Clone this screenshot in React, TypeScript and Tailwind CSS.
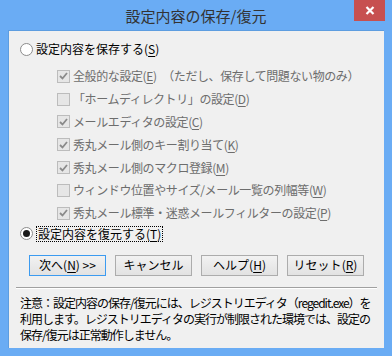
import React from "react";

const FONT = { fontFamily: '"Noto Sans CJK JP", "Noto Sans", sans-serif' };

// ── small pieces ────────────────────────────────────────────────────────────
function Key({ k }: { k: string }) {
  return (
    <>
      (<span className="underline underline-offset-2">{k}</span>)
    </>
  );
}

function Check({ checked }: { checked: boolean }) {
  return (
    <span className="flex h-[13px] w-[13px] shrink-0 items-center justify-center border border-[#bcbcbc] bg-[#e6e6e6]">
      {checked && (
        <svg width="9" height="8" viewBox="0 0 9 8">
          <path d="M1 4 L3.5 6.5 L8 1" fill="none" stroke="#8a8a8a" strokeWidth="1.8" />
        </svg>
      )}
    </span>
  );
}

function Radio({ on }: { on: boolean }) {
  return (
    <span className="flex h-[13px] w-[13px] shrink-0 items-center justify-center rounded-full border border-[#8c8c8c] bg-white">
      {on && <span className="h-[7px] w-[7px] rounded-full bg-[#1a1a1a]" />}
    </span>
  );
}

const rows: { label: React.ReactNode; checked: boolean }[] = [
  { label: <>全般的な設定<Key k="E" />　（ただし、保存して問題ない物のみ）</>, checked: true },
  { label: <>「ホームディレクトリ」の設定<Key k="D" /></>, checked: false },
  { label: <>メールエディタの設定<Key k="C" /></>, checked: true },
  { label: <>秀丸メール側のキー割り当て<Key k="K" /></>, checked: true },
  { label: <>秀丸メール側のマクロ登録<Key k="M" /></>, checked: true },
  { label: <>ウィンドウ位置やサイズ/メール一覧の列幅等<Key k="W" /></>, checked: false },
  { label: <>秀丸メール標準・迷惑メールフィルターの設定<Key k="P" /></>, checked: true },
];

function Btn({ children, primary }: { children: React.ReactNode; primary?: boolean }) {
  return (
    <button
      className={`flex h-[21px] w-[77px] items-center justify-center bg-gradient-to-b from-[#f2f2f2] to-[#e2e2e2] text-[12px] text-black ${
        primary ? "border border-[#3c9bf0]" : "border border-[#acacac]"
      }`}
    >
      {children}
    </button>
  );
}

export default function App() {
  return (
    <div className="h-[356px] w-[392px] bg-[#6aacf4] text-[12px] leading-none text-black" style={FONT}>
      {/* title bar */}
      <div className="relative flex h-[30px] items-center justify-center">
        <span className="text-[15px] text-[#333333]">設定内容の保存/復元</span>
        <div className="absolute right-[7px] top-0 flex h-[21px] w-[31px] items-center justify-center bg-[#c75050]">
          <svg width="10" height="9" viewBox="0 0 10 9">
            <path d="M1.5 1 L8.5 8 M8.5 1 L1.5 8" stroke="white" strokeWidth="2.2" />
          </svg>
        </div>
      </div>

      {/* client area */}
      <div className="mx-[8px] flex h-[318px] flex-col border-l border-t border-[#5d9de0] bg-[#f0f0f0]">
        <div className="ml-[11px] mt-[11px] flex h-[14px] items-center gap-[3px]">
          <Radio on={false} />
          <span>設定内容を保存する<Key k="S" /></span>
        </div>

        <div className="ml-[48px] mt-[9px] flex flex-col">
          {rows.map((r, i) => (
            <div key={i} className="flex h-[22.8px] items-center gap-[3px] text-[#6d6d6d]">
              <Check checked={r.checked} />
              <span className="whitespace-nowrap tracking-[-0.4px]">{r.label}</span>
            </div>
          ))}
        </div>

        <div className="ml-[11px] mt-[1px] flex h-[16px] items-center gap-[3px]">
          <Radio on />
          <span className="border border-dotted border-black px-px py-[1px]">設定内容を復元する<Key k="T" /></span>
        </div>

        <div className="ml-[20px] mt-[13px] flex gap-[9px]">
          <Btn primary>
            次へ<Key k="N" /> &gt;&gt;
          </Btn>
          <Btn>キャンセル</Btn>
          <Btn>ヘルプ<Key k="H" /></Btn>
          <Btn>リセット<Key k="R" /></Btn>
        </div>

        <div className="mx-[7px] mt-[11px] border-t border-b border-t-[#a0a0a0] border-b-white" />

        <p className="ml-[11px] mt-[6px] whitespace-nowrap text-[12px] leading-[16px] tracking-[-1px]">
          注意：設定内容の保存/復元には、レジストリエディタ（regedit.exe）を
          <br />
          利用します。レジストリエディタの実行が制限された環境では、設定の
          <br />
          保存/復元は正常動作しません。
        </p>
      </div>
    </div>
  );
}
